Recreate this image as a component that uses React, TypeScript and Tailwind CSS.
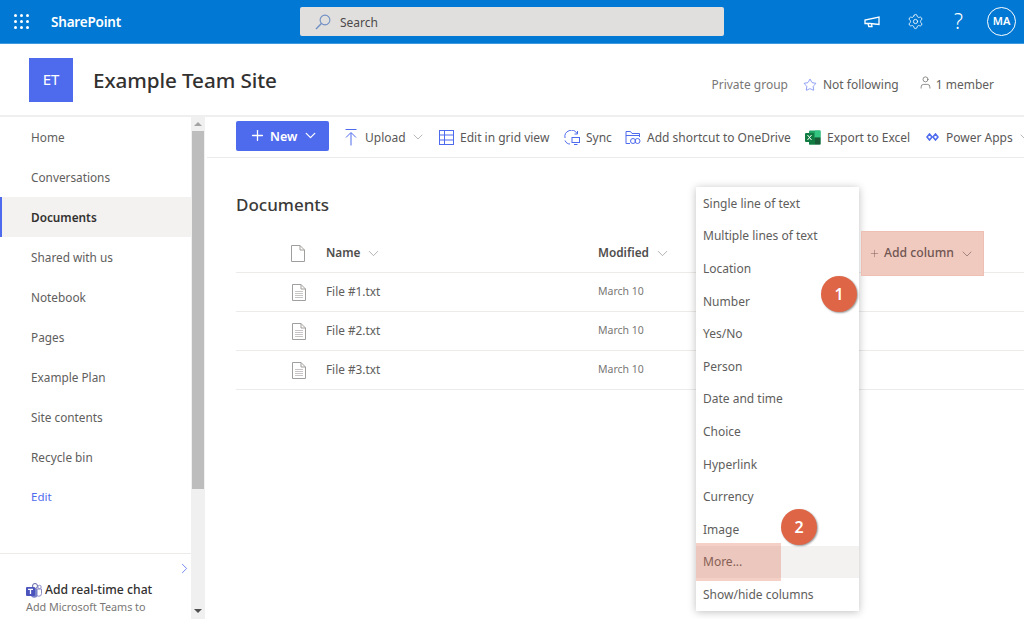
import { ChevronDown, ChevronRight, Plus, Star, User, Settings } from 'lucide-react';

const navItems = ['Home', 'Conversations', 'Documents', 'Shared with us', 'Notebook', 'Pages', 'Example Plan', 'Site contents', 'Recycle bin'];
const files = ['File #1.txt', 'File #2.txt', 'File #3.txt'];
const menuItems = ['Single line of text', 'Multiple lines of text', 'Location', 'Number', 'Yes/No', 'Person', 'Date and time', 'Choice', 'Hyperlink', 'Currency', 'Image', 'More...', 'Show/hide columns'];

function Waffle() {
  return (
    <div className="grid grid-cols-3 gap-[3px] w-[15px]">
      {Array.from({ length: 9 }).map((_, i) => (
        <div key={i} className="w-[3px] h-[3px] bg-white rounded-full" />
      ))}
    </div>
  );
}

function SearchIcon() {
  return (
    <svg width="16" height="16" viewBox="0 0 16 16" fill="none" stroke="#6f8fc4" strokeWidth="1.1">
      <circle cx="10" cy="6" r="4.9" />
      <path d="M6.4 9.6L1 15" strokeWidth="1.4" />
    </svg>
  );
}

function MegaphoneIcon() {
  return (
    <svg width="16" height="12" viewBox="0 0 16 12" fill="none" stroke="#fff" strokeWidth="1.3">
      <path d="M15 1V8.5L6 7.5H1V4L15 1Z" />
      <path d="M4 7.5L4.8 10.5L8 10.5L7.6 8" />
    </svg>
  );
}

function UploadIcon() {
  return (
    <svg width="12" height="17" viewBox="0 0 12 17" fill="none" stroke="#4f6bed" strokeWidth="1">
      <path d="M0.5 0.5H11.5" />
      <path d="M6 16.5V4M1 8.5L6 3.5L11 8.5" />
    </svg>
  );
}

function GridIcon() {
  return (
    <svg width="15" height="15" viewBox="0 0 15 15" fill="none" stroke="#4f6bed" strokeWidth="1">
      <rect x="0.5" y="0.5" width="14" height="14" />
      <path d="M0.5 5H14.5M0.5 10H14.5M5.5 0.5V14.5" />
    </svg>
  );
}

function SyncIcon() {
  return (
    <svg width="16" height="15" viewBox="0 0 16 15" fill="none" stroke="#4f6bed" strokeWidth="1">
      <path d="M1 8A6.5 6.5 0 0 1 13 3.5" />
      <path d="M13.5 1V4H10.5" />
      <path d="M1 10.5C2 13 4 14 6 14" />
      <rect x="8" y="7.5" width="7.5" height="5" />
      <path d="M10 14.5H13.5" />
    </svg>
  );
}

function ShortcutIcon() {
  return (
    <svg width="16" height="15" viewBox="0 0 16 15" fill="none" stroke="#4f6bed" strokeWidth="1">
      <path d="M5 13.5H1V1.5H5.5L7 3.5H14.5V7" />
      <path d="M1 5.5H14.5" />
      <rect x="5.5" y="8.5" width="5" height="5" rx="2.5" />
      <rect x="10" y="8.5" width="5" height="5" rx="2.5" />
    </svg>
  );
}

function FileIcon({ lines }: { lines?: boolean }) {
  return (
    <svg width="14" height="17" viewBox="0 0 14 17" fill="none" stroke="#a19f9d" strokeWidth="1">
      <path d="M0.5 0.5H9L13.5 5V16.5H0.5Z" fill="#fff" />
      <path d="M9 0.5V5H13.5" />
      {lines && <path d="M3 7.5H11M3 9.5H11M3 11.5H11M3 13.5H11" stroke="#c8c6c4" />}
    </svg>
  );
}

function ExcelIcon() {
  return (
    <svg width="16" height="15" viewBox="0 0 16 15">
      <rect x="4" y="0.5" width="11.5" height="14" rx="1" fill="#21a366" />
      <rect x="10" y="0.5" width="5.5" height="7" fill="#33c481" />
      <rect x="4" y="7.5" width="6" height="7" fill="#107c41" />
      <rect x="10" y="7.5" width="5.5" height="7" fill="#185c37" />
      <rect x="0" y="3" width="9" height="9" rx="1" fill="#107c41" />
      <path d="M2.5 5L6.5 10M6.5 5L2.5 10" stroke="#fff" strokeWidth="1" />
    </svg>
  );
}

function PowerAppsIcon() {
  return (
    <svg width="13" height="8" viewBox="0 0 13 8" fill="none" stroke="#4f6bed" strokeWidth="1.6">
      <path d="M3.5 1L6 4L3.5 7L1 4Z" />
      <path d="M9.5 1L12 4L9.5 7L7 4Z" />
    </svg>
  );
}

function TeamsIcon() {
  return (
    <svg width="16" height="15" viewBox="0 0 16 15">
      <circle cx="9" cy="3" r="2.5" fill="none" stroke="#6264a7" />
      <circle cx="13.5" cy="4" r="1.7" fill="none" stroke="#8b8cc7" />
      <path d="M10 6H15.5V10.5A2.6 2.6 0 0 1 10 10.5Z" fill="none" stroke="#8b8cc7" />
      <path d="M5 6H11.5V11.5A3.2 3.2 0 0 1 5 11.5Z" fill="#7b83c9" />
      <rect x="0" y="4" width="9" height="9" rx="1" fill="#4b53bc" />
      <path d="M2 6.3H7M4.5 6.3V11" stroke="#fff" strokeWidth="1.3" />
    </svg>
  );
}

function ToolItem({ icon, label, chevron, w }: { icon: React.ReactNode; label: string; chevron?: boolean; w: string }) {
  return (
    <div className={`flex items-center shrink-0 text-[12px] text-[#5a5857] ${w}`}>
      <span className="flex items-center justify-center w-[16px] mr-[6px] shrink-0">{icon}</span>
      <span className="whitespace-nowrap pt-[1px]">{label}</span>
      {chevron && <ChevronDown size={16} strokeWidth={0.9} className="ml-[4px] shrink-0 text-[#8a8886]" />}
    </div>
  );
}

export default function App() {
  return (
    <div className="relative w-[1024px] h-[619px] overflow-hidden bg-white text-[#323130] font-['Noto_Sans','Open_Sans',sans-serif]">
      {/* suite bar */}
      <header className="h-[44px] bg-[#0078d4] border-b border-[#3d9be0] flex items-center text-white">
        <div className="w-[51px] pl-[14px]"><Waffle /></div>
        <div className="w-[249px] text-[13.5px] font-semibold tracking-[-0.2px] mt-[1px]">SharePoint</div>
        <div className="w-[424px] h-[29px] bg-[#e1dfdd] rounded-[2px] flex items-center pl-[15px] text-[12px] text-[#4b4a49]">
          <SearchIcon />
          <span className="ml-[9px] mt-[2px]">Search</span>
        </div>
        <div className="flex-1 flex items-center justify-end pr-[8px]">
          <MegaphoneIcon />
          <Settings size={17} strokeWidth={1.2} className="ml-[27px]" />
          <span className="text-[21px] font-light leading-none ml-[30px] mr-[24px]">?</span>
          <div className="w-[29px] h-[29px] rounded-full border border-white flex items-center justify-center text-[11px] font-semibold">MA</div>
        </div>
      </header>

      {/* site header */}
      <div className="h-[73px] flex items-center pl-[29px] border-b-2 border-[#efefef]">
        <div className="w-[44px] h-[44px] bg-[#4f6bed] flex items-center justify-center text-white text-[15px] mr-[20px]">ET</div>
        <div className="text-[20.7px] font-medium tracking-[-0.1px] mt-[2px]">Example Team Site</div>
        <div className="ml-auto flex items-center pr-[30px] pt-[10px] text-[12px] text-[#605e5c]">
          <span className="text-[#797775] mr-[15px]">Private group</span>
          <Star size={14} strokeWidth={1.1} className="text-[#4f6bed] mr-[6px]" />
          <span className="mr-[19px]">Not following</span>
          <User size={15} strokeWidth={1.1} className="mr-[3px] -mt-[4px]" />
          <span>1 member</span>
        </div>
      </div>

      <div className="flex h-[502px]">
        {/* left nav */}
        <aside className="w-[191px] shrink-0 flex flex-col">
          <nav>
            {navItems.map((item) =>
              item === 'Documents' ? (
                <div key={item} className="h-[40px] flex items-center pl-[29px] pt-[1px] bg-[#f3f2f1] border-l-2 border-[#4f6bed] text-[11.8px] font-semibold text-[#323130]">
                  {item}
                </div>
              ) : (
                <div key={item} className="h-[40px] flex items-center pl-[31px] pt-[1px] text-[11.8px] text-[#605e5c]">
                  {item}
                </div>
              )
            )}
            <div className="h-[40px] flex items-center pl-[31px] text-[11.5px] text-[#4f6bed]">Edit</div>
          </nav>
          <div className="mt-[36px] border-t border-[#edebe9] relative pl-[26px] pt-[27px]">
            <ChevronRight size={17} strokeWidth={1.1} className="absolute right-[-2px] top-[6px] text-[#4f6bed]" />
            <div className="flex items-center text-[12.2px] font-medium text-[#323130] h-[18px]">
              <TeamsIcon />
              <span className="ml-[3px]">Add real-time chat</span>
            </div>
            <div className="text-[10.8px] text-[#797775] whitespace-nowrap">Add Microsoft Teams to</div>
          </div>
        </aside>

        {/* scrollbar */}
        <div className="w-[14px] shrink-0 mr-[2px] bg-[#f0f0f0] flex flex-col items-center">
          <div className="h-[14px] flex items-center justify-center">
            <div className="border-x-[4px] border-x-transparent border-b-[4px] border-b-[#a3a3a3]" />
          </div>
          <div className="w-[12px] h-[358px] bg-[#bdbdbd]" />
          <div className="flex-1" />
          <div className="h-[14px] flex items-center justify-center mb-[1px]">
            <div className="border-x-[4px] border-x-transparent border-t-[4px] border-t-[#505050]" />
          </div>
        </div>

        {/* content */}
        <main className="flex-1 min-w-0">
          <div className="h-[41px] border-b border-[#edebe9] flex items-center pl-[29px] overflow-hidden">
            <div className="w-[93px] h-[30px] shrink-0 bg-[#4f6bed] rounded-[2px] flex items-center text-white text-[12.5px] font-semibold pl-[13px] mr-[14px] -mt-[3px]">
              <Plus size={17} strokeWidth={1.8} className="mr-[4px]" />
              <span className="pt-[3px]">New</span>
              <ChevronDown size={17} strokeWidth={1.8} className="ml-[5px]" />
            </div>
            <ToolItem w="w-[95px]" label="Upload" chevron icon={<UploadIcon />} />
            <ToolItem w="w-[126px]" label="Edit in grid view" icon={<GridIcon />} />
            <ToolItem w="w-[61px]" label="Sync" icon={<SyncIcon />} />
            <ToolItem w="w-[180px]" label="Add shortcut to OneDrive" icon={<ShortcutIcon />} />
            <ToolItem w="w-[119px]" label="Export to Excel" icon={<ExcelIcon />} />
            <ToolItem w="w-[120px]" label="Power Apps" chevron icon={<PowerAppsIcon />} />
          </div>

          <div className="pl-[29px]">
            <h1 className="text-[17px] font-medium mt-[35px] h-[24px] leading-[24px] text-[#3b3a39]">Documents</h1>
            <div className="mt-[17px] h-[39px] border-b border-[#edebe9] flex items-center text-[11.8px] font-semibold text-[#4f4e4d]">
              <div className="w-[90px] pl-[55px]"><FileIcon /></div>
              <div className="w-[272px] flex items-center">
                Name
                <ChevronDown size={17} strokeWidth={0.9} className="ml-[5px] text-[#8a8886]" />
              </div>
              <div className="flex items-center">
                Modified
                <ChevronDown size={17} strokeWidth={0.9} className="ml-[5px] text-[#8a8886]" />
              </div>
            </div>
            {files.map((file) => (
              <div key={file} className="h-[39px] border-b border-[#edebe9] flex items-center text-[11.8px] text-[#605e5c]">
                <div className="w-[90px] pl-[56px]"><FileIcon lines /></div>
                <div className="w-[272px]">{file}</div>
                <div className="text-[10.5px] text-[#797775]">March 10</div>
              </div>
            ))}
          </div>
        </main>
      </div>

      {/* column menu */}
      <div className="absolute left-[696px] top-[187px] w-[163px] h-[424px] bg-white shadow-[0_1px_8px_rgba(0,0,0,0.25)]">
        {menuItems.map((item) => (
          <div
            key={item}
            className={`h-[32.6px] flex items-center pl-[7px] pt-[1px] text-[12px] text-[#605e5c] whitespace-nowrap ${item === 'More...' ? 'bg-[#f3f2f1]' : ''}`}
          >
            {item}
          </div>
        ))}
      </div>

      {/* annotation highlights */}
      <div className="absolute left-[861px] top-[231px] w-[123px] h-[45px] bg-[#f0c9bf] border border-[#eec0b4] flex items-center pl-[7px] text-[12.2px] font-medium text-[#705652]">
        <Plus size={11} strokeWidth={1} className="mr-[4px]" />
        Add column
        <ChevronDown size={16} strokeWidth={0.9} className="ml-[5px]" />
      </div>
      <div className="absolute left-[696px] top-[543px] w-[85px] h-[38px] bg-[#de6546]/30" />
      <div className="absolute left-[821px] top-[276px] w-[36px] h-[36px] rounded-full bg-[#de6546] shadow-[1px_1px_2px_rgba(0,0,0,0.4)] flex items-center justify-center text-white text-[16px] font-semibold">1</div>
      <div className="absolute left-[781px] top-[509px] w-[36px] h-[36px] rounded-full bg-[#de6546] shadow-[1px_1px_2px_rgba(0,0,0,0.4)] flex items-center justify-center text-white text-[16px] font-semibold">2</div>
    </div>
  );
}
